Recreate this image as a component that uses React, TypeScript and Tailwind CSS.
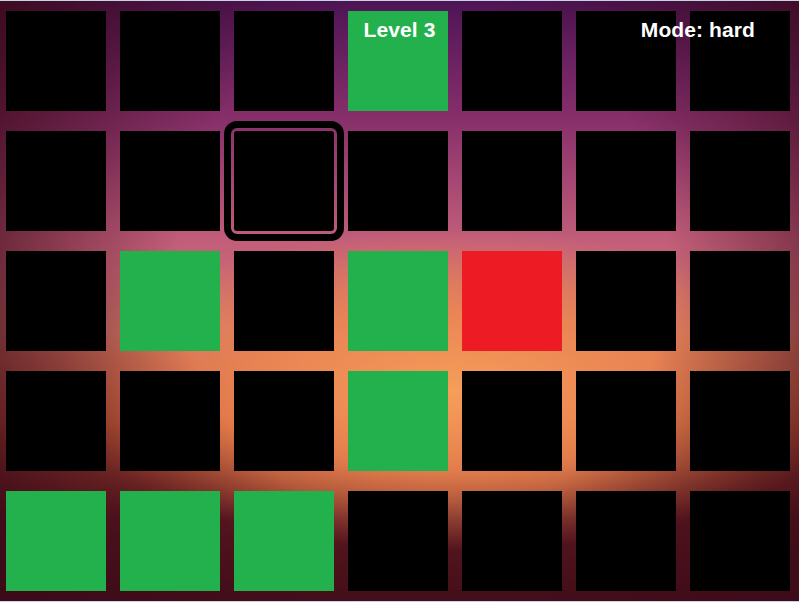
import React, { FC, ReactElement } from "react";

type CellState = "empty" | "hit" | "miss";

const board: CellState[][] = [
  ["empty", "empty", "empty", "hit", "empty", "empty", "empty"],
  ["empty", "empty", "empty", "empty", "empty", "empty", "empty"],
  ["empty", "hit", "empty", "hit", "miss", "empty", "empty"],
  ["empty", "empty", "empty", "hit", "empty", "empty", "empty"],
  ["hit", "hit", "hit", "empty", "empty", "empty", "empty"],
];

const cursor = { row: 1, col: 2 };

const cellColor: Record<CellState, string> = {
  empty: "bg-black",
  hit: "bg-[#22b14c]",
  miss: "bg-[#ed1c24]",
};

const Cell: FC<{ state: CellState; active: boolean }> = ({
  state,
  active,
}): ReactElement => (
  <div
    className={`h-[100px] w-[100px] ${cellColor[state]} ${
      active
        ? "rounded-[3px] outline-[7px] outline-offset-[3px] outline-black outline-solid"
        : ""
    }`}
  />
);

const App: FC = (): ReactElement => {
  return (
    <div className="w-[799px] h-[602px] bg-[#c6d4e8] py-px font-['Liberation_Sans',Arial,sans-serif]">
      <div className="relative h-[600px] w-full overflow-hidden bg-[radial-gradient(ellipse_64%_90%_at_53%_44%,transparent_48%,rgba(60,10,24,0.94)_100%),radial-gradient(ellipse_400px_160px_at_57%_65%,rgba(246,158,90,1)_0%,rgba(238,136,82,0.85)_50%,rgba(236,135,84,0)_100%),linear-gradient(to_bottom,#4e1456_0%,#88306a_20%,#c25e7a_40%,#d07468_55%,#c85a34_70%,#5c1820_86%,#46101a_100%)] pl-[6px] pt-[10px]">
        <div className="grid grid-cols-[repeat(7,100px)] gap-x-[14px] gap-y-[20px]">
          {board.map((row, r) =>
            row.map((state, c) => (
              <Cell
                key={`${r}-${c}`}
                state={state}
                active={r === cursor.row && c === cursor.col}
              />
            ))
          )}
        </div>

        <div className="absolute inset-x-0 top-[17px] grid grid-cols-[1fr_auto_1fr] items-center text-[21px] font-bold leading-6 text-white">
          <div />
          <span className="tracking-[0.1px]">Level 3</span>
          <div className="flex justify-end pr-[44px]">
            <span className="tracking-[0.1px]">Mode: hard</span>
          </div>
        </div>
      </div>
    </div>
  );
};

export default App;
